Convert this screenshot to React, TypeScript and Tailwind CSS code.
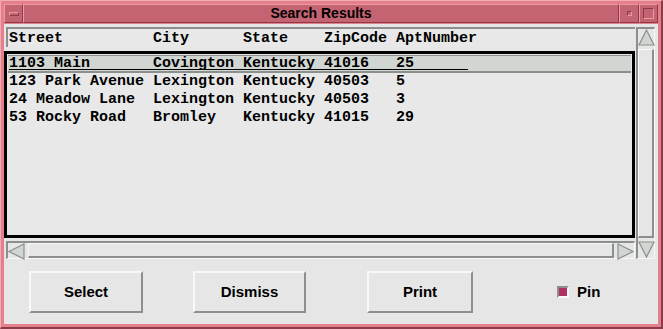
import React from 'react'

const mono = "font-['Liberation_Mono',monospace] font-bold text-[15px] leading-[18px] whitespace-pre text-black"
const sans = "font-['Liberation_Sans',Arial,sans-serif] font-bold"

const header = 'Street          City      State    ZipCode AptNumber'
const rows = [
  '1103 Main       Covington Kentucky 41016   25',
  '123 Park Avenue Lexington Kentucky 40503   5',
  '24 Meadow Lane  Lexington Kentucky 40503   3',
  '53 Rocky Road   Bromley   Kentucky 41015   29',
]

function Arrow({ dir }: { dir: 'up' | 'down' | 'left' | 'right' }) {
  const pts = {
    up: '8.5,1 16,16 1,16',
    down: '1,1 16,1 8.5,16',
    left: '1,8.5 16,1 16,16',
    right: '1,1 16,8.5 1,16',
  }[dir]
  return (
    <svg width="17" height="17" viewBox="0 0 17 17" className="block shrink-0">
      <polygon points={pts} fill="#d2d6d2" stroke="#8c908c" strokeWidth="1.2" />
    </svg>
  )
}

function Button({ label, className }: { label: string; className?: string }) {
  return (
    <button
      className={`h-[42px] border-2 border-t-[#f8f8f8] border-l-[#f8f8f8] border-b-[#8c908c] border-r-[#8c908c] bg-[#e6e6e6] text-[15px] text-black ${sans} ${className ?? ''}`}
    >
      {label}
    </button>
  )
}

export default function App() {
  return (
    <div className="w-[663px] h-[329px] bg-[#e4808c] border-t border-l border-t-[#f4aab2] border-l-[#f4aab2] border-b-2 border-r-2 border-b-[#8c3c48] border-r-[#8c3c48] p-[3px] flex flex-col">
      {/* Title bar */}
      <div className="h-[19px] flex shrink-0">
        <div className="w-[19px] bg-[#c46472] border border-t-[#ec9aa4] border-l-[#ec9aa4] border-b-[#8c3c48] border-r-[#8c3c48] flex items-center justify-center">
          <div className="w-[10px] h-[4px] border border-t-[#ec9aa4] border-l-[#ec9aa4] border-b-[#8c3c48] border-r-[#8c3c48]" />
        </div>
        <div className={`flex-1 bg-[#c46472] border border-t-[#ec9aa4] border-l-[#ec9aa4] border-b-[#8c3c48] border-r-[#8c3c48] flex items-center justify-center text-[14px] text-black ${sans}`}>
          Search Results
        </div>
        <div className="w-[20px] bg-[#c46472] border border-t-[#ec9aa4] border-l-[#ec9aa4] border-b-[#8c3c48] border-r-[#8c3c48] flex items-center justify-center">
          <div className="w-[5px] h-[5px] border border-t-[#8c3c48] border-l-[#8c3c48] border-b-[#ec9aa4] border-r-[#ec9aa4]" />
        </div>
        <div className="w-[19px] bg-[#c46472] border border-t-[#ec9aa4] border-l-[#ec9aa4] border-b-[#8c3c48] border-r-[#8c3c48] flex items-center justify-center">
          <div className="w-[11px] h-[11px] border border-t-[#8c3c48] border-l-[#8c3c48] border-b-[#ec9aa4] border-r-[#ec9aa4]" />
        </div>
      </div>

      {/* Client area */}
      <div className="flex-1 bg-[#e6e6e6] flex flex-col mt-[1px]">
        <div className="flex pt-[3px]">
          {/* List column */}
          <div className="w-[631px] flex flex-col">
            <div className={`ml-[2px] h-[20px] border-t-2 border-l-2 border-[#8c908c] bg-[#e8e8e8] pl-[1px] pt-[1px] ${mono}`}>
              {header}
            </div>
            <div className="mt-[4px] h-[187px] border-[3px] border-black bg-[#e8e8e8] pt-[1px] pl-[1px] pr-[1px]">
              {rows.map((r, i) =>
                i === 0 ? (
                  <div
                    key={i}
                    className="h-[18px] bg-[#d2d6d2] border-t border-t-[#8c908c] border-b-2 border-b-[#8c908c] relative"
                  >
                    <div className={`${mono} pl-[1px] -mt-[1px]`}>{r}</div>
                    <div className="absolute left-[1px] top-[13px] w-[459px] h-[1px] bg-black" />
                  </div>
                ) : (
                  <div key={i} className={`${mono} pl-[1px]`}>
                    {r}
                  </div>
                ),
              )}
            </div>
            {/* Horizontal scrollbar */}
            <div className="ml-[2px] mt-[3px] h-[18px] border-t-2 border-l-2 border-b border-r border-t-[#8c908c] border-l-[#8c908c] border-b-[#f8f8f8] border-r-[#f8f8f8] flex bg-[#e6e6e6]">
              <Arrow dir="left" />
              <div className="flex-1 border-b-2 border-r-2 border-[#8c908c] border-l border-l-[#f8f8f8] border-t border-t-[#f8f8f8] ml-[3px] mr-[3px]" />
              <Arrow dir="right" />
            </div>
          </div>
          {/* Vertical scrollbar */}
          <div className="ml-[1px] w-[19px] h-[232px] border-t-2 border-l-2 border-b border-r border-t-[#8c908c] border-l-[#8c908c] border-b-[#f8f8f8] border-r-[#f8f8f8] flex flex-col bg-[#e6e6e6]">
            <Arrow dir="up" />
            <div className="flex-1 border-b-2 border-r-2 border-[#8c908c] border-l border-l-[#f8f8f8] border-t border-t-[#f8f8f8] mt-[3px] mb-[3px]" />
            <Arrow dir="down" />
          </div>
        </div>

        {/* Buttons */}
        <div className="flex items-center mt-[12px]">
          <Button label="Select" className="ml-[25px] w-[114px]" />
          <Button label="Dismiss" className="ml-[50px] w-[113px]" />
          <Button label="Print" className="ml-[61px] w-[106px]" />
          <div className="ml-[84px] flex items-center gap-[8px]">
            <div className="w-[12px] h-[12px] border-2 border-t-[#8c908c] border-l-[#8c908c] border-b-[#f8f8f8] border-r-[#f8f8f8] bg-[#b03060]" />
            <span className={`text-[15px] text-black ${sans}`}>Pin</span>
          </div>
        </div>
      </div>
    </div>
  )
}
